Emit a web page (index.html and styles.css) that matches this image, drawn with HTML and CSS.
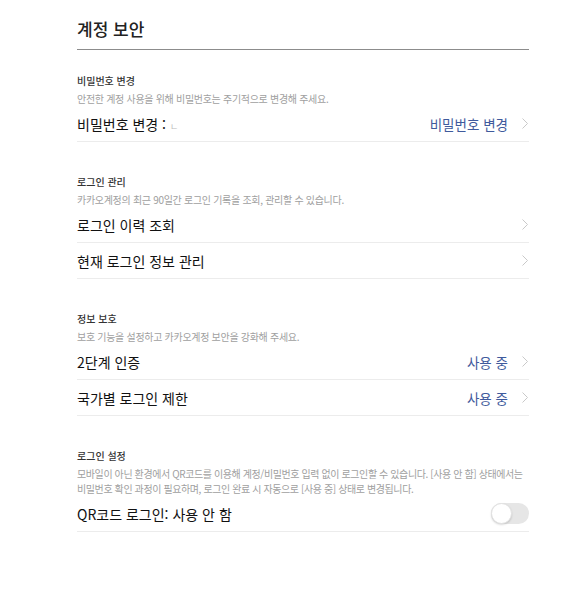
FILE: index.html
```html
<!DOCTYPE html>
<html lang="ko">
<head>
    <meta charset="UTF-8">
    <meta name="viewport" content="width=device-width, initial-scale=1.0">
    <title>계정 보안</title>
    <link rel="stylesheet" href="styles.css">
</head>
<body>
    <div class="container">
        <h1>계정 보안</h1>

        <div class="section">
            <h3>비밀번호 변경</h3>
            <p class="desc">안전한 계정 사용을 위해 비밀번호는 주기적으로 변경해 주세요.</p>
            <div class="row">
                <span class="row-title">비밀번호 변경 : <span class="masked">ㄴ</span></span>
                <span class="row-value">비밀번호 변경</span>
                <svg class="chevron" width="6" height="11" viewBox="0 0 6 11"><polyline points="0.5,0.5 5.5,5.5 0.5,10.5" fill="none" stroke="#c9c9c9" stroke-width="1"/></svg>
            </div>
        </div>

        <div class="section">
            <h3>로그인 관리</h3>
            <p class="desc">카카오계정의 최근 90일간 로그인 기록을 조회, 관리할 수 있습니다.</p>
            <div class="row">
                <span class="row-title">로그인 이력 조회</span>
                <svg class="chevron" width="6" height="11" viewBox="0 0 6 11"><polyline points="0.5,0.5 5.5,5.5 0.5,10.5" fill="none" stroke="#c9c9c9" stroke-width="1"/></svg>
            </div>
            <div class="row">
                <span class="row-title">현재 로그인 정보 관리</span>
                <svg class="chevron" width="6" height="11" viewBox="0 0 6 11"><polyline points="0.5,0.5 5.5,5.5 0.5,10.5" fill="none" stroke="#c9c9c9" stroke-width="1"/></svg>
            </div>
        </div>

        <div class="section">
            <h3>정보 보호</h3>
            <p class="desc">보호 기능을 설정하고 카카오계정 보안을 강화해 주세요.</p>
            <div class="row">
                <span class="row-title">2단계 인증</span>
                <span class="row-value">사용 중</span>
                <svg class="chevron" width="6" height="11" viewBox="0 0 6 11"><polyline points="0.5,0.5 5.5,5.5 0.5,10.5" fill="none" stroke="#c9c9c9" stroke-width="1"/></svg>
            </div>
            <div class="row">
                <span class="row-title">국가별 로그인 제한</span>
                <span class="row-value">사용 중</span>
                <svg class="chevron" width="6" height="11" viewBox="0 0 6 11"><polyline points="0.5,0.5 5.5,5.5 0.5,10.5" fill="none" stroke="#c9c9c9" stroke-width="1"/></svg>
            </div>
        </div>

        <div class="section">
            <h3>로그인 설정</h3>
            <p class="desc desc-long">모바일이 아닌 환경에서 QR코드를 이용해 계정/비밀번호 입력 없이 로그인할 수 있습니다. [사용 안 함] 상태에서는<br>비밀번호 확인 과정이 필요하며, 로그인 완료 시 자동으로 [사용 중] 상태로 변경됩니다.</p>
            <div class="row">
                <span class="row-title">QR코드 로그인: 사용 안 함</span>
                <span class="toggle"><span class="knob"></span></span>
            </div>
        </div>
    </div>
</body>
</html>
```
FILE: styles.css
```css
body {
    font-family: "Noto Sans CJK KR", "Noto Sans", sans-serif;
    margin: 0;
    padding: 0;
    background-color: #fff;
    color: #1e1e1e;
}
.container {
    width: 452px;
    margin-left: 77px;
}
h1 {
    margin: 0;
    padding: 17px 0 8px;
    font-size: 17px;
    line-height: 24px;
    font-weight: 500;
    color: #222;
    border-bottom: 1px solid #8c8c8c;
}
.section {
    margin-top: 31px;
}
h1 + .section {
    margin-top: 22px;
}
.section h3 {
    margin: 0;
    font-size: 10px;
    line-height: 18px;
    font-weight: 500;
    color: #333;
}
.desc {
    margin: 1px 0 0;
    font-size: 10px;
    line-height: 15px;
    letter-spacing: -0.3px;
    color: #a0a0a0;
}
.desc-long {
    white-space: nowrap;
    letter-spacing: -0.4px;
}
.row {
    display: flex;
    align-items: center;
    height: 35px;
    border-bottom: 1px solid #ececec;
}
.row-title {
    flex: 1;
    font-size: 14px;
    font-weight: 400;
    color: #111;
}
.masked {
    font-size: 9px;
    color: #bbb;
}
.row-value {
    font-size: 13.5px;
    font-weight: 400;
    color: #3f5a9c;
    margin-right: 14px;
}
.chevron {
    margin-right: 1px;
}
.toggle {
    position: relative;
    width: 38px;
    height: 21px;
    border-radius: 11px;
    background-color: #e6e6e6;
}
.knob {
    position: absolute;
    left: 0;
    top: 0;
    width: 21px;
    height: 21px;
    box-sizing: border-box;
    border-radius: 50%;
    background-color: #fff;
    border: 1px solid #e2e2e2;
    box-shadow: 0 1px 2px rgba(0, 0, 0, 0.15);
}
```
